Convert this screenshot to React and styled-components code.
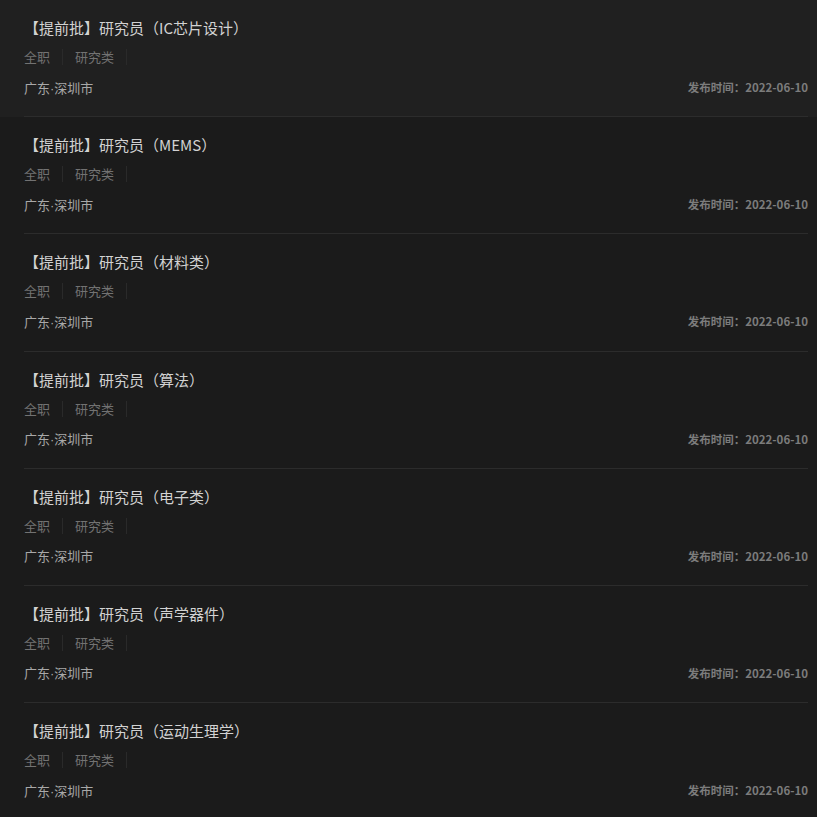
import React from "react";
import styled, { createGlobalStyle } from "styled-components";

const Global = createGlobalStyle`
  html, body { margin: 0; padding: 0; background: #1b1b1b; }
  body { font-family: "Microsoft YaHei", "Noto Sans CJK SC", "Noto Sans", sans-serif; }
`;

const List = styled.div`
  width: 817px;
  height: 817px;
  overflow: hidden;
  background: #1b1b1b;
  display: flex;
  flex-direction: column;
`;

const Item = styled.div`
  flex: none;
  padding: 0 9px 0 24px;
  background: ${(p) => (p.$active ? "#202020" : "transparent")};
`;

const Inner = styled.div`
  height: 117.2px;
  box-sizing: border-box;
  padding-top: 18px;
  border-bottom: 1px solid #2c2c2c;
  display: flex;
  flex-direction: column;
`;

const Title = styled.div`
  font-size: 15px;
  line-height: 20px;
  height: 20px;
  color: #d2d2d2;
  white-space: nowrap;
`;

const Tags = styled.div`
  display: flex;
  margin-top: 9px;
  height: 20px;
  align-items: center;
`;

const Tag = styled.span`
  font-size: 13px;
  line-height: 16px;
  color: #727272;
  padding: 0 12px;
  border-right: 1px solid #2a2a2a;
  &:first-child { padding-left: 0; }
`;

const Meta = styled.div`
  margin-top: 10px;
  height: 20px;
  display: flex;
  align-items: center;
  justify-content: space-between;
`;

const Location = styled.span`
  font-size: 13px;
  color: #a8a8a8;
`;

const Dot = styled.span`
  font-family: "Liberation Sans", sans-serif;
`;

const Date = styled.span`
  font-size: 11.5px;
  font-weight: 700;
  color: #7c7c7c;
`;

const jobs = [
  "IC芯片设计",
  "MEMS",
  "材料类",
  "算法",
  "电子类",
  "声学器件",
  "运动生理学",
];

export default function App() {
  return (
    <>
      <Global />
      <List>
        {jobs.map((j, i) => (
          <Item key={j} $active={i === 0}>
            <Inner>
              <Title>【提前批】研究员（{j}）</Title>
              <Tags>
                <Tag>全职</Tag>
                <Tag>研究类</Tag>
              </Tags>
              <Meta>
                <Location>
                  广东<Dot>·</Dot>深圳市
                </Location>
                <Date>发布时间：2022-06-10</Date>
              </Meta>
            </Inner>
          </Item>
        ))}
      </List>
    </>
  );
}
